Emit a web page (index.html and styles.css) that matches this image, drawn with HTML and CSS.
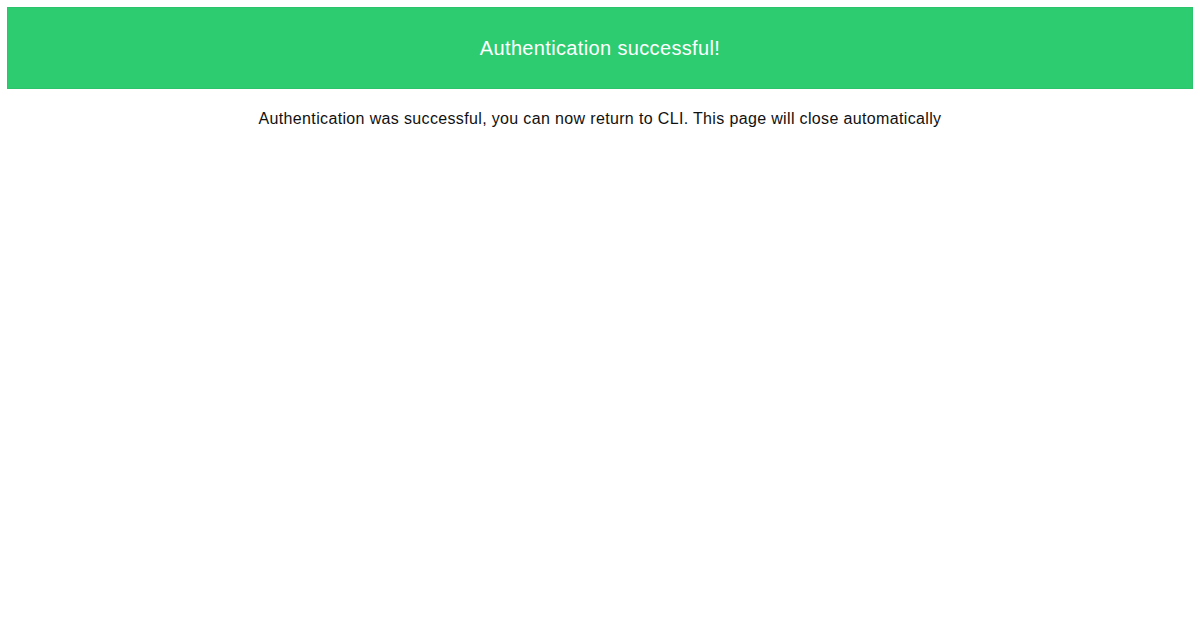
FILE: index.html
```html
<!DOCTYPE html>
<html lang="en">

<head>
    <meta charset="UTF-8">
    <meta name="viewport" content="width=device-width, initial-scale=1.0">
    <title>Authentication successful</title>
    <link rel="stylesheet" href="styles.css">
</head>

<body>
    <div class="banner">
        <h1>Authentication successful!</h1>
    </div>
    <p class="message">Authentication was successful, you can now return to CLI. This page will close automatically</p>
</body>

</html>
```

FILE: styles.css
```css
body,
h1,
p {
    margin: 0;
    padding: 0;
    font-weight: normal;
}

body {
    padding: 7px;
    font-family: "Liberation Sans", Arial, sans-serif;
    letter-spacing: 0.35px;
    color: #111;
    background: #fff;
}

.banner {
    height: 80px;
    display: flex;
    align-items: center;
    justify-content: center;
    background: #2ecc71;
    border: 1px solid #2bc46c;
}

.banner h1 {
    font-size: 20px;
    color: #fff;
}

.message {
    margin-top: 20px;
    font-size: 16px;
    line-height: 20px;
    text-align: center;
}
```
